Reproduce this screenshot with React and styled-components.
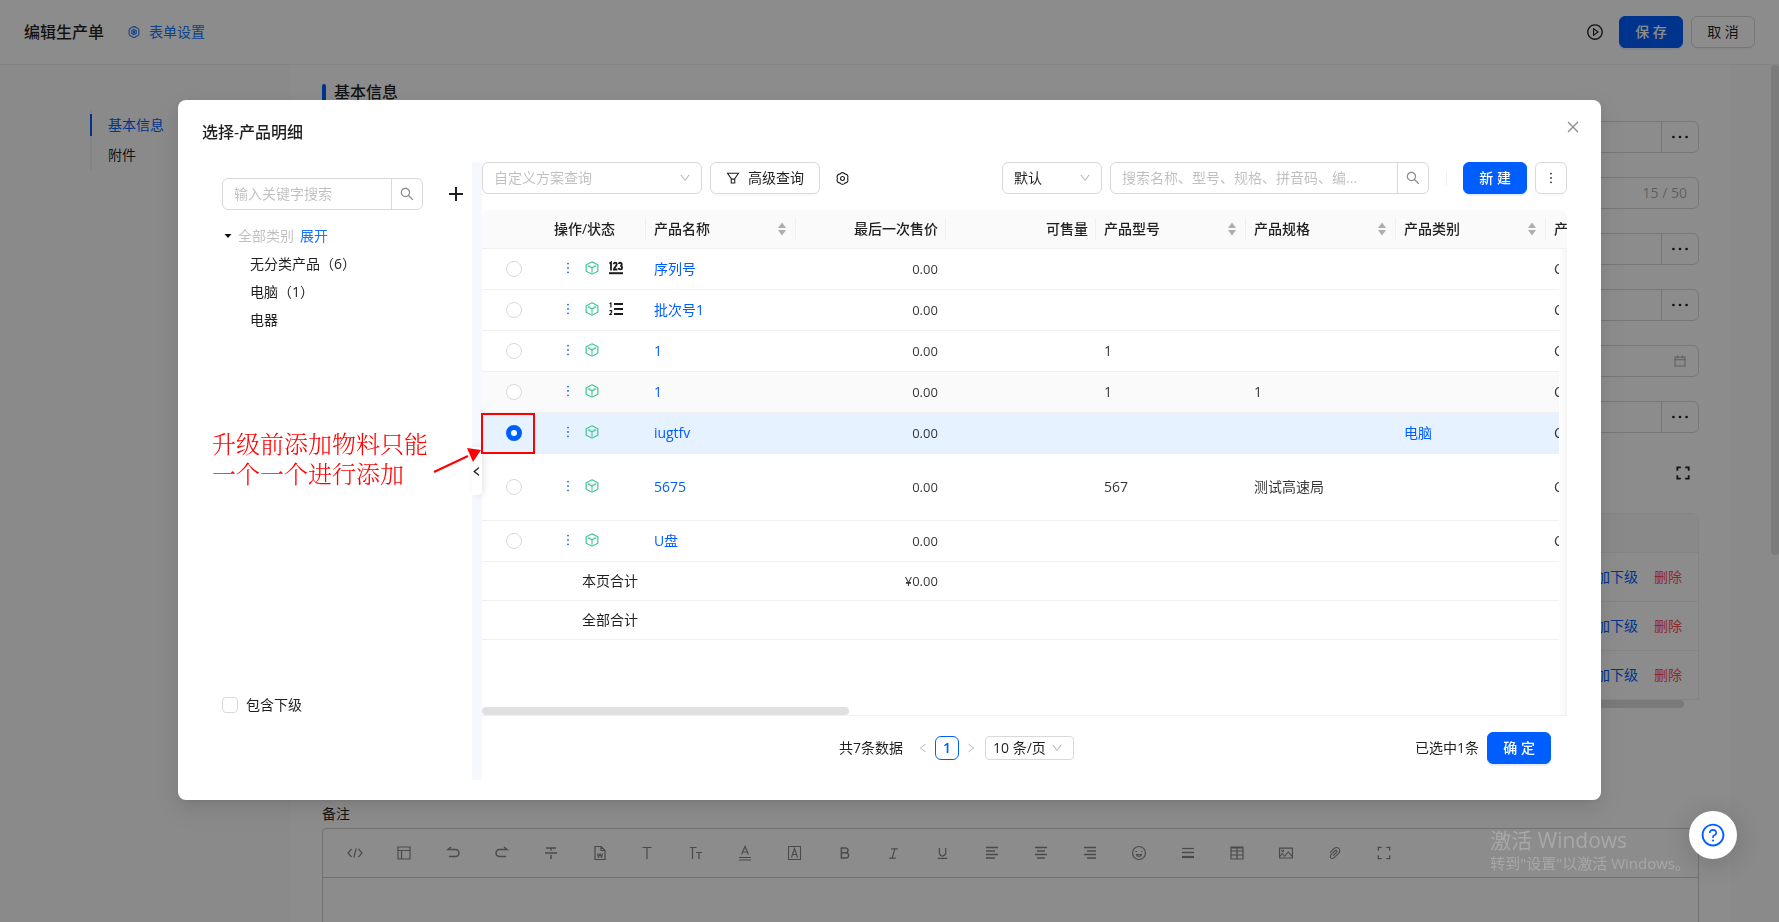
import React from "react";
import styled, { createGlobalStyle, css } from "styled-components";
import {
  AiOutlineBold,
  AiOutlineCalendar,
  AiOutlineClose,
  AiOutlineDown,
  AiOutlineEllipsis,
  AiOutlineItalic,
  AiOutlineLeft,
  AiOutlineMore,
  AiOutlinePaperClip,
  AiOutlinePicture,
  AiOutlinePlayCircle,
  AiOutlineQuestionCircle,
  AiOutlineRight,
  AiOutlineSearch,
  AiOutlineUnderline,
} from "react-icons/ai";

const primary = "#005eff";
const line = "#d9d9d9";
const faint = "#f0f0f0";
const muted = "rgba(0, 0, 0, 0.25)";

const GlobalStyle = createGlobalStyle`
  * { box-sizing: border-box; }
  html, body, #root { height: 100%; }
  body {
    margin: 0;
    overflow: hidden;
    background: #fff;
    color: rgba(0, 0, 0, 0.88);
    font: 14px/22px "Open Sans", "Noto Sans CJK SC", sans-serif;
  }
  button, input, select, textarea { font: inherit; color: inherit; }
  button { cursor: pointer; }
  a { color: ${primary}; text-decoration: none; }
  svg { display: block; flex: none; }
`;

/* ---------- shared controls ---------- */

const Button = styled.button`
  display: inline-flex;
  align-items: center;
  justify-content: center;
  gap: 8px;
  height: 32px;
  padding: 0 ${(p) => (p.$square ? 0 : 15)}px;
  width: ${(p) => (p.$square ? "32px" : "auto")};
  min-width: ${(p) => (p.$square ? 32 : 64)}px;
  flex: none;
  white-space: nowrap;
  border: 1px solid ${line};
  border-radius: 6px;
  background: #fff;
  box-shadow: 0 2px 0 rgba(0, 0, 0, 0.02);
  ${(p) =>
    p.$primary &&
    css`
      border-color: ${primary};
      background: ${primary};
      color: #fff;
      font-weight: 500;
      box-shadow: 0 2px 0 rgba(5, 100, 255, 0.1);
    `}
`;

const IconButton = styled.button`
  display: inline-flex;
  align-items: center;
  justify-content: center;
  padding: 0;
  border: 0;
  background: none;
  color: ${(p) => p.$color || "inherit"};
`;

const SelectBox = styled.label`
  display: grid;
  align-items: center;
  width: ${(p) => p.$width}px;
  height: ${(p) => p.$height || 32}px;
  flex: none;
  color: ${(p) => (p.$placeholder ? "rgba(0,0,0,0.25)" : "inherit")};
  select, svg { grid-area: 1 / 1; }
  select {
    width: 100%;
    height: 100%;
    padding: 0 ${(p) => (p.$height ? 7 : 11)}px;
    border: 1px solid ${line};
    border-radius: ${(p) => (p.$height ? 4 : 6)}px;
    background: #fff;
    appearance: none;
  }
  svg {
    justify-self: end;
    margin-right: 11px;
    color: rgba(0, 0, 0, 0.3);
    pointer-events: none;
  }
`;

const SearchGroup = styled.div`
  display: flex;
  width: ${(p) => p.$width}px;
  height: 32px;
  flex: none;
  border: 1px solid ${line};
  border-radius: 6px;
  background: #fff;
  input {
    flex: 1;
    min-width: 0;
    padding: 0 11px;
    border: 0;
    outline: 0;
    background: none;
    text-overflow: ellipsis;
  }
  input::placeholder { color: ${muted}; }
  button {
    width: 31px;
    border-left: 1px solid ${line};
    color: rgba(0, 0, 0, 0.45);
  }
`;

/* ---------- page behind the dialog ---------- */

const Page = styled.div`
  display: flex;
  flex-direction: column;
  height: 100%;
`;

const TopBar = styled.header`
  display: flex;
  align-items: center;
  gap: 8px;
  height: 65px;
  flex: none;
  padding: 0 24px;
  border-bottom: 1px solid ${faint};
  h1 { margin: 0 16px 0 0; font-size: 16px; line-height: 24px; font-weight: 500; }
  a { display: flex; align-items: center; gap: 9px; color: #1677ff; }
  > ${IconButton} { margin-right: 7px; }
`;

const Spacer = styled.span`
  flex: 1;
`;

const Shell = styled.div`
  display: flex;
  flex: 1;
  min-height: 0;
  overflow: hidden;
  background: #fcfcfc;
`;

const Anchors = styled.nav`
  width: 290px;
  flex: none;
  padding: 45px 0 0 90px;
  ul {
    display: grid;
    gap: 8px;
    margin: 0;
    padding: 4px 0;
    list-style: none;
    border-left: 2px solid ${faint};
  }
`;

const Anchor = styled.li`
  margin-left: -2px;
  padding-left: 16px;
  border-left: 2px solid ${(p) => (p.$active ? primary : "transparent")};
  a { color: ${(p) => (p.$active ? primary : "inherit")}; }
`;

const Content = styled.main`
  flex: 1;
  min-width: 0;
  padding: 15px 32px 0;
  background: #fff;
`;

const SectionTitle = styled.h2`
  display: flex;
  align-items: center;
  gap: 8px;
  margin: 0 0 17px;
  font-size: 16px;
  line-height: 24px;
  font-weight: 500;
  &::before {
    content: "";
    width: 4px;
    height: 16px;
    border-radius: 2px 2px 0 0;
    background: ${primary};
  }
`;

const Fields = styled.div`
  display: grid;
  gap: 24px;
`;

const Field = styled.div`
  display: flex;
  align-items: center;
  height: 32px;
  border: 1px solid ${line};
  border-radius: 6px;
  color: rgba(0, 0, 0, 0.45);
  input { flex: 1; min-width: 0; border: 0; outline: 0; background: none; }
  > span, > svg { margin-right: 11px; color: rgba(0, 0, 0, 0.35); }
  button {
    width: 37px;
    height: 100%;
    border-left: 1px solid ${line};
    color: rgba(0, 0, 0, 0.88);
  }
`;

const DetailBar = styled.div`
  display: flex;
  justify-content: flex-end;
  align-items: center;
  height: 24px;
  margin: 28px 0;
  padding-right: 9px;
`;

const DetailTable = styled.table`
  width: 100%;
  border: 1px solid ${faint};
  border-bottom: 0;
  border-radius: 8px 8px 0 0;
  border-spacing: 0;
  th { height: 39px; padding: 0; background: #fafafa; border-bottom: 1px solid ${faint}; }
  td { height: 49px; padding: 0 16px; border-bottom: 1px solid ${faint}; text-align: right; }
  td a + a { margin-left: 16px; color: #ff4d4f; }
`;

const Thumb = styled.div`
  height: 8px;
  border-radius: 4px;
  width: ${(p) => p.$width};
  background: ${(p) => p.$color};
`;

const RemarkLabel = styled.label`
  display: block;
  margin: 95px 0 3px;
`;

const Editor = styled.div`
  border: 1px solid #d0d0d0;
  border-radius: 4px;
  textarea { display: block; width: 100%; height: 200px; border: 0; resize: none; background: none; }
`;

const EditorTools = styled.div`
  display: flex;
  height: 49px;
  padding: 0 8px 0 7px;
  border-bottom: 1px solid #d0d0d0;
  button { width: 49px; color: #888; }
`;

const PageScroll = styled.div`
  width: 48px;
  flex: none;
  div { width: 8px; height: 490px; margin-left: auto; border-radius: 4px; background: #e0e0e0; }
`;

/* ---------- dialog ---------- */

const Mask = styled.div`
  position: fixed;
  inset: 0;
  background: rgba(0, 0, 0, 0.45);
`;

const Dialog = styled.section`
  position: fixed;
  top: 100px;
  left: 10%;
  right: 10%;
  display: flex;
  flex-direction: column;
  border-radius: 8px;
  background: #fff;
  box-shadow: 0 6px 16px rgba(0, 0, 0, 0.08), 0 3px 6px -4px rgba(0, 0, 0, 0.12),
    0 9px 28px 8px rgba(0, 0, 0, 0.05);
`;

const DialogHead = styled.div`
  display: flex;
  justify-content: space-between;
  height: 62px;
  padding: 19px 20px 0 24px;
  h2 { margin: 0; font-size: 16px; line-height: 26px; font-weight: 500; }
  button { width: 16px; height: 16px; color: rgba(0, 0, 0, 0.45); }
`;

const DialogBody = styled.div`
  display: flex;
  height: 618px;
  margin: 0 34px 20px 44px;
`;

const Side = styled.aside`
  display: flex;
  flex-direction: column;
  width: 250px;
  flex: none;
  padding-top: 16px;
`;

const SideSearch = styled.div`
  display: flex;
  align-items: center;
  justify-content: space-between;
  padding-right: 8px;
`;

const Tree = styled.ul`
  flex: 1;
  margin: 12px 0 0;
  padding: 0;
  list-style: none;
  line-height: 28px;
  ul { margin: 0; padding: 0 0 0 28px; list-style: none; }
`;

const TreeRoot = styled.div`
  display: flex;
  align-items: center;
  gap: 6px;
  padding-left: 2px;
  span { color: ${muted}; }
  a { color: #1677ff; }
`;

const CheckLabel = styled.label`
  display: flex;
  align-items: center;
  gap: 8px;
  margin-bottom: 64px;
  input {
    width: 16px;
    height: 16px;
    margin: 0;
    border: 1px solid ${line};
    border-radius: 4px;
    appearance: none;
  }
`;

const Splitter = styled.div`
  display: flex;
  flex-direction: column;
  justify-content: center;
  width: 10px;
  flex: none;
  background: #f7f8fd;
  button {
    width: 10px;
    height: 48px;
    border-radius: 0 4px 4px 0;
    background: #fff;
    box-shadow: 2px 0 6px rgba(0, 0, 0, 0.1);
  }
`;

const Panel = styled.div`
  display: flex;
  flex-direction: column;
  flex: 1;
  min-width: 0;
`;

const Toolbar = styled.div`
  display: flex;
  align-items: center;
  gap: 8px;
  margin-bottom: 16px;
  > i { width: 1px; height: 13px; margin: 0 8px 0 9px; background: ${faint}; }
  > ${IconButton} { width: 30px; height: 32px; }
`;

const TableFrame = styled.div`
  position: relative;
  display: flex;
  flex-direction: column;
  justify-content: space-between;
  height: 506px;
  overflow: hidden;
  border-bottom: 1px solid ${faint};
  border-radius: 8px 8px 0 0;
`;

const Gutter = styled.div`
  position: absolute;
  top: 39px;
  right: 0;
  bottom: 0;
  width: 8px;
  background: linear-gradient(to right, #fff, #f5f5f5);
`;

const Grid = styled.table`
  width: 1214px;
  flex: none;
  table-layout: fixed;
  border-spacing: 0;
`;

const Column = styled.col`
  width: ${(p) => p.$width}px;
`;

const HeadCell = styled.th`
  height: 39px;
  padding: 0 8px;
  border-bottom: 1px solid ${faint};
  background: #fafafa;
  background-image: ${(p) => (p.$divider ? `linear-gradient(${faint}, ${faint})` : "none")};
  background-size: 1px 22px;
  background-position: right center;
  background-repeat: no-repeat;
  text-align: ${(p) => (p.$right ? "right" : "left")};
  font-weight: 500;
  white-space: nowrap;
  > div { display: flex; align-items: center; justify-content: space-between; }
  svg { color: rgba(0, 0, 0, 0.3); }
`;

const Row = styled.tr`
  background: ${(p) => (p.$selected ? "#e6f2ff" : p.$hover ? "#fafafa" : "transparent")};
  td { height: ${(p) => p.$height || 41}px; }
`;

const Cell = styled.td`
  padding: 0 8px;
  border-bottom: 1px solid ${faint};
  text-align: ${(p) => p.$align || "left"};
  color: ${(p) => (p.$strong ? "inherit" : "rgba(0, 0, 0, 0.8)")};
  overflow: hidden;
  white-space: nowrap;
`;

const Num = styled.span`
  font-size: 13px;
`;

const Radio = styled.input`
  display: block;
  width: 16px;
  height: 16px;
  margin: 0 auto;
  border: 1px solid ${line};
  border-radius: 50%;
  background: #fff;
  appearance: none;
  &:checked { border: 5px solid ${primary}; }
`;

const Ops = styled.div`
  display: flex;
  align-items: center;
  gap: 10px;
  padding: 0 0 2px 7px;
  ${IconButton} { width: 14px; }
`;

const Footer = styled.div`
  display: flex;
  align-items: center;
  padding: 16px 16px 0;
`;

const Pager = styled.div`
  display: flex;
  flex: 1;
  align-items: center;
  justify-content: center;
  > span { margin-right: 8px; }
  > ${IconButton} { width: 24px; height: 24px; color: rgba(0, 0, 0, 0.25); }
  > label { margin-left: 2px; }
`;

const PageNumber = styled.button`
  width: 24px;
  height: 24px;
  padding: 0;
  border: 1px solid ${primary};
  border-radius: 6px;
  background: #fff;
  color: ${primary};
  font-weight: 600;
  line-height: 20px;
`;

const Confirm = styled.div`
  display: flex;
  align-items: center;
  gap: 8px;
`;

/* ---------- things lying over the screen ---------- */

const Note = styled.p`
  position: absolute;
  top: 330px;
  left: 34px;
  margin: 0;
  color: #f00;
  font: 300 24px/30px "Liberation Serif", "Noto Serif CJK SC", "Noto Sans CJK SC", serif;
  white-space: nowrap;
`;

const NoteMark = styled.svg`
  position: absolute;
  top: 308px;
  left: 252px;
  pointer-events: none;
`;

const Watermark = styled.div`
  position: fixed;
  right: 89px;
  bottom: 49px;
  color: rgba(255, 255, 255, 0.24);
  font-size: 15px;
  line-height: 20px;
  pointer-events: none;
  strong { display: block; font-size: 21px; line-height: 26px; font-weight: 400; }
`;

const Help = styled.button`
  position: fixed;
  right: 42px;
  bottom: 63px;
  display: grid;
  place-items: center;
  width: 48px;
  height: 48px;
  padding: 0;
  border: 0;
  border-radius: 50%;
  background: #fff;
  color: ${primary};
  box-shadow: 0 4px 24px 4px rgba(0, 0, 0, 0.12);
`;

/* ---------- drawings ---------- */

function Glyph({ children, size = 16, width = 1.2, ...rest }) {
  return (
    <svg width={size} height={size} viewBox="0 0 16 16" fill="none" stroke="currentColor" strokeWidth={width} {...rest}>
      {children}
    </svg>
  );
}

const Gear = ({ size = 12, hex }) => (
  <Glyph size={size} width={1.4}>
    <path d="M5.6 1.7Q8 0 10.400 1.700 10.900 2.700 12.200 2.600 14.900 3.600 14.700 6.300 14 8 14.700 9.700 14.900 12.400 12.200 13.400 10.900 13.300 10.400 14.300 8 16 5.600 14.300 5.100 13.300 3.800 13.400 1.100 12.400 1.300 9.700 2 8 1.300 6.300 1.100 3.600 3.800 2.600 5.100 2.700 5.600 1.700z" />
    {hex ? (
      <>
        <path d="M8 4.600 11 6.300v3.400L8 11.400 5 9.700V6.300z" />
        <circle cx="8" cy="8" r="1" />
      </>
    ) : (
      <circle cx="8" cy="8" r="2.400" />
    )}
  </Glyph>
);

const Plus = () => (
  <Glyph width={2}>
    <path d="M8 1v14M1 8h14" />
  </Glyph>
);

const Cube = () => (
  <Glyph size={14} width={1.3} stroke="#34c38f">
    <path d="M8 .900 14.700 4.400v7.200L8 15.100 1.300 11.600V4.400z" />
    <path d="M3.200 5.400 8 8l4.800-2.600M8 8v5.500" strokeWidth="1.200" />
    <path d="M4 4.600 8 6.300l4-1.700" strokeWidth="0.600" opacity="0.6" />
  </Glyph>
);

const Serial = () => (
  <svg width="14" height="14" viewBox="0 0 14 14" fill="none" stroke="#1c1c1c" strokeWidth="1.800">
    <path d="M.4 2.600 2 1.400v8M4.700 3.200c0-2 3-2 3 0C7.700 5 5 6.700 4.900 8.500h3.500M9.800 3c.2-1.800 3-1.600 3 .2 0 1.100-.7 1.600-1.600 1.600 1.200 0 1.900.6 1.900 1.900 0 2.200-3.300 2.400-3.600.2" />
    <path d="M0 12.200h14" strokeWidth="2" />
  </svg>
);

const Batch = () => (
  <svg width="14" height="14" viewBox="0 0 14 14" fill="none" stroke="#1c1c1c">
    <path d="M5 2h9M5 7h9M5 12h9" strokeWidth="1.800" />
    <path d="M.5 1.700 1.900 1v4.500M.4 8.700h2.200v1.600L.7 12.500h2.300" strokeWidth="1.200" />
  </svg>
);

const Sorter = () => (
  <svg width="12" height="14" viewBox="0 0 12 14" fill="currentColor">
    <path d="M6 .5 10 6H2zM6 13.500 2 8h8z" />
  </svg>
);

const Caret = () => (
  <svg width="8" height="6" viewBox="0 0 8 6" fill="#111">
    <path d="M.5 1h7L4 5z" />
  </svg>
);

const Funnel = () => (
  <Glyph size={14} width={1.200}>
    <path d="M1.700 2.500h12.600L10 8.800v5H6v-5zM6 9.300h4" />
  </Glyph>
);

const Expand = ({ size = 14, width = 2 }) => (
  <Glyph size={size} width={width}>
    <path d="M1.500 5.500v-4h4M10.500 1.500h4v4M14.500 10.500v4h-4M5.500 14.500h-4v-4" />
  </Glyph>
);

const editorTools = [
  ["源码", <Glyph><path d="M4.500 4 1 8l3.500 4M11.500 4 15 8l-3.500 4M9.200 3.500 6.800 12.500" /></Glyph>],
  ["模板", <Glyph><path d="M2 2h12v12H2zM2 5.500h12M5.500 5.500V14" /></Glyph>],
  ["撤销", <Glyph width={1.500}><path d="M3 4.500h7.500a3.500 3.500 0 0 1 0 7H4M6 2 3 4.500h3" /></Glyph>],
  ["重做", <Glyph width={1.500}><path d="M13 4.500H5.500a3.500 3.500 0 0 0 0 7H12M10 2l3 2.500h-3" /></Glyph>],
  ["删除线", <Glyph width={1.500}><path d="M3 3h10M8 3v2.500M2 8h12M8 10v4" /></Glyph>],
  ["导入文档", <Glyph><path d="M3 1.500h6L13 5.500v9H3zM9 1.500v4h4M5.500 8.500 6.500 12 8 9l1.500 3 1-3.500" /></Glyph>],
  ["字体", <Glyph viewBox="2 0 16 16"><path d="M3.500 2.500h9M8 2.500V14" /></Glyph>],
  ["字号", <Glyph viewBox="3 0 16 16"><path d="M1.500 2.500h8M5.500 2.500V14M9 7.500h6M12 7.500V14" /></Glyph>],
  ["文字颜色", <Glyph viewBox="2 0 16 16"><path d="M4.500 9.500 8 1.500l3.500 8M5.500 7h5M2 12.500h12M2 15h12" /></Glyph>],
  ["背景颜色", <Glyph width={1.100} viewBox="2 0 16 16"><path d="M2.500 1.500h12v13h-12zM5.500 12.500l3-9 3 9M6.500 9.500h4" /></Glyph>],
  ["加粗", <AiOutlineBold size={16} />],
  ["斜体", <AiOutlineItalic size={15} />],
  ["下划线", <AiOutlineUnderline size={15} />],
  ["左对齐", <Glyph width={1.400}><path d="M2 2.500h12M2 6h9M2 9.500h12M2 13h9" /></Glyph>],
  ["居中", <Glyph width={1.400}><path d="M2 2.500h12M4 6h8M2 9.500h12M4 13h8" /></Glyph>],
  ["右对齐", <Glyph width={1.400}><path d="M2 2.500h12M5 6h9M2 9.500h12M5 13h9" /></Glyph>],
  ["表情", <Glyph><circle cx="8" cy="8" r="6.500" /><path d="M4.500 6.500h1.500M10 6.500h1.500M5.500 9.500c.6 2.500 4.400 2.500 5 0z" /></Glyph>],
  ["分割线", <Glyph><path d="M2 3.500h12" /><path d="M2 7.500h12" strokeWidth="1.500" /><path d="M2 12h12" strokeWidth="2.200" /></Glyph>],
  ["表格", <Glyph><path d="M2 2h12v12H2zM2 6h12M2 10h12M8 2v12M2 3h12" /></Glyph>],
  ["图片", <AiOutlinePicture size={16} />],
  ["附件", <AiOutlinePaperClip size={16} />],
  ["全屏", <Expand size={14} width={1.500} />],
];

const columns = [
  { title: "产品名称", sort: true },
  { title: "最后一次售价", right: true },
  { title: "可售量", right: true },
  { title: "产品型号", sort: true },
  { title: "产品规格", sort: true },
  { title: "产品类别", sort: true },
  { title: "产" },
];

const products = [
  { name: "序列号", mark: <Serial /> },
  { name: "批次号1", mark: <Batch /> },
  { name: "1", model: "1" },
  { name: "1", model: "1", spec: "1", hover: true },
  { name: "iugtfv", kind: "电脑", selected: true },
  { name: "5675", model: "567", spec: "测试高速局", height: 67 },
  { name: "U盘" },
];

const fields = [
  ["单据类型", "more"],
  ["主题", "count"],
  ["生产产品", "more"],
  ["负责人", "more"],
  ["日期", "date"],
  ["仓库", "more"],
];

function BackgroundPage() {
  return (
    <Page>
      <TopBar>
        <h1>编辑生产单</h1>
        <a href="#settings">
          <Gear hex />
          表单设置
        </a>
        <Spacer />
        <IconButton aria-label="播放">
          <AiOutlinePlayCircle size={18} />
        </IconButton>
        <Button $primary>保 存</Button>
        <Button>取 消</Button>
      </TopBar>
      <Shell>
        <Anchors>
          <ul>
            <Anchor $active><a href="#basic">基本信息</a></Anchor>
            <Anchor><a href="#files">附件</a></Anchor>
          </ul>
        </Anchors>
        <Content>
          <SectionTitle>基本信息</SectionTitle>
          <Fields>
            {fields.map(([label, kind]) => (
              <Field key={label}>
                <input aria-label={label} />
                {kind === "more" && (
                  <IconButton aria-label={"选择" + label}><AiOutlineEllipsis size={24} /></IconButton>
                )}
                {kind === "count" && <span>15 / 50</span>}
                {kind === "date" && <AiOutlineCalendar size={14} />}
              </Field>
            ))}
          </Fields>
          <DetailBar>
            <IconButton aria-label="全屏"><Expand size={14} /></IconButton>
          </DetailBar>
          <DetailTable>
            <thead><tr><th /></tr></thead>
            <tbody>
              {[0, 1, 2].map((i) => (
                <tr key={i}>
                  <td>
                    <a href="#add">添加下级</a>
                    <a href="#delete">删除</a>
                  </td>
                </tr>
              ))}
            </tbody>
          </DetailTable>
          <Thumb $width="calc(100% - 15px)" $color="#dedede" />
          <RemarkLabel htmlFor="remark">备注</RemarkLabel>
          <Editor>
            <EditorTools>
              {editorTools.map(([label, icon]) => (
                <IconButton key={label} aria-label={label}>{icon}</IconButton>
              ))}
            </EditorTools>
            <textarea id="remark" />
          </Editor>
        </Content>
        <PageScroll><div /></PageScroll>
      </Shell>
    </Page>
  );
}

function ProductTable() {
  return (
    <TableFrame>
      <Grid>
        <colgroup>
          <Column $width={64} />
          <Column $width={100} />
          {columns.map((c) => <Column key={c.title} $width={150} />)}
        </colgroup>
        <thead>
          <tr>
            <HeadCell />
            <HeadCell $divider>操作/状态</HeadCell>
            {columns.map((c) => (
              <HeadCell key={c.title} $divider $right={c.right}>
                {c.sort ? <div>{c.title}<Sorter /></div> : c.title}
              </HeadCell>
            ))}
          </tr>
        </thead>
        <tbody>
          {products.map((p, i) => (
            <Row key={i} $selected={p.selected} $hover={p.hover} $height={p.height}>
              <Cell>
                <Radio type="radio" name="product" aria-label={p.name} defaultChecked={p.selected} />
              </Cell>
              <Cell>
                <Ops>
                  <IconButton $color={primary} aria-label="更多操作"><AiOutlineMore size={16} /></IconButton>
                  <Cube />
                  {p.mark}
                </Ops>
              </Cell>
              <Cell><a href={"#product-" + i}>{p.name}</a></Cell>
              <Cell $align="right"><Num>0.00</Num></Cell>
              <Cell />
              <Cell>{p.model}</Cell>
              <Cell>{p.spec}</Cell>
              <Cell>{p.kind && <a href="#kind">{p.kind}</a>}</Cell>
              <Cell>C</Cell>
            </Row>
          ))}
          <Row $height={39}>
            <Cell colSpan={2} $align="right" $strong>本页合计</Cell>
            <Cell />
            <Cell $align="right"><Num>¥0.00</Num></Cell>
            <Cell colSpan={5} />
          </Row>
          <Row $height={39}>
            <Cell colSpan={2} $align="right" $strong>全部合计</Cell>
            <Cell colSpan={7} />
          </Row>
        </tbody>
      </Grid>
      <Gutter />
      <Thumb $width="367px" $color="#e0e0e0" />
    </TableFrame>
  );
}

function ProductDialog() {
  return (
    <Dialog role="dialog" aria-labelledby="dialog-title">
      <DialogHead>
        <h2 id="dialog-title">选择-产品明细</h2>
        <IconButton aria-label="关闭"><AiOutlineClose size={16} /></IconButton>
      </DialogHead>
      <DialogBody>
        <Side>
          <SideSearch>
            <SearchGroup $width={201}>
              <input placeholder="输入关键字搜索" aria-label="输入关键字搜索" />
              <IconButton aria-label="搜索类别"><AiOutlineSearch size={16} /></IconButton>
            </SearchGroup>
            <IconButton aria-label="新增类别"><Plus /></IconButton>
          </SideSearch>
          <Tree>
            <li>
              <TreeRoot><Caret /><span>全部类别</span><a href="#expand">展开</a></TreeRoot>
              <ul>
                <li>无分类产品（6）</li>
                <li>电脑（1）</li>
                <li>电器</li>
              </ul>
            </li>
          </Tree>
          <CheckLabel><input type="checkbox" />包含下级</CheckLabel>
        </Side>
        <Splitter>
          <IconButton aria-label="收起"><AiOutlineLeft size={11} strokeWidth={50} /></IconButton>
        </Splitter>
        <Panel>
          <Toolbar>
            <SelectBox $width={220} $placeholder>
              <select aria-label="自定义方案查询"><option>自定义方案查询</option></select>
              <AiOutlineDown size={12} />
            </SelectBox>
            <Button><Funnel />高级查询</Button>
            <IconButton aria-label="设置"><Gear size={13} /></IconButton>
            <Spacer />
            <SelectBox $width={100}>
              <select aria-label="查询方式"><option>默认</option></select>
              <AiOutlineDown size={12} />
            </SelectBox>
            <SearchGroup $width={319}>
              <input placeholder="搜索名称、型号、规格、拼音码、编..." aria-label="搜索产品" />
              <IconButton aria-label="搜索"><AiOutlineSearch size={16} /></IconButton>
            </SearchGroup>
            <i />
            <Button $primary>新 建</Button>
            <Button $square aria-label="更多"><AiOutlineMore size={16} /></Button>
          </Toolbar>
          <ProductTable />
          <Footer>
            <Pager>
              <span>共7条数据</span>
              <IconButton aria-label="上一页"><AiOutlineLeft size={12} /></IconButton>
              <PageNumber>1</PageNumber>
              <IconButton aria-label="下一页"><AiOutlineRight size={12} /></IconButton>
              <SelectBox $width={89} $height={24}>
                <select aria-label="每页条数"><option>10 条/页</option></select>
                <AiOutlineDown size={12} />
              </SelectBox>
            </Pager>
            <Confirm>
              <span>已选中1条</span>
              <Button $primary>确 定</Button>
            </Confirm>
          </Footer>
        </Panel>
      </DialogBody>
      <Note>
        升级前添加物料只能
        <br />
        一个一个进行添加
      </Note>
      <NoteMark width="110" height="70" viewBox="0 0 110 70" fill="none" stroke="#f00" strokeWidth="2">
        <path d="M52 6h52v39H52z" />
        <path d="M4 64 38 48" />
        <path d="M37 40 51 42 43 54z" fill="#f00" stroke="none" />
      </NoteMark>
    </Dialog>
  );
}

export default function App() {
  return (
    <>
      <GlobalStyle />
      <BackgroundPage />
      <Mask />
      <ProductDialog />
      <Watermark>
        <strong>激活 Windows</strong>
        转到"设置"以激活 Windows。
      </Watermark>
      <Help aria-label="帮助"><AiOutlineQuestionCircle size={26} /></Help>
    </>
  );
}
